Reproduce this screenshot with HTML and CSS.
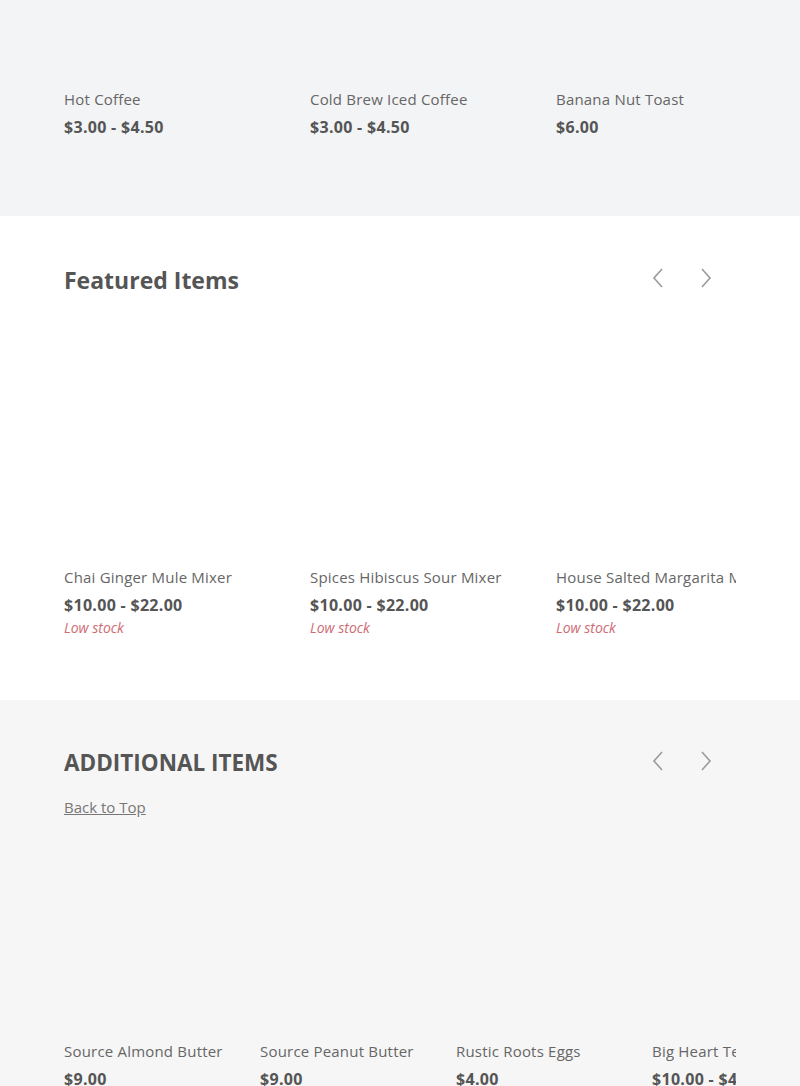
FILE: index.html
```html
<!DOCTYPE html>
<html lang="en">
<head>
  <meta charset="UTF-8">
  <title>Shop</title>
  <link rel="stylesheet" href="styles.css">
</head>
<body>

  <section class="strip strip-top">
    <div class="track">
      <div class="card wide">
        <div class="thumb thumb-cut"></div>
        <div class="name">Hot Coffee</div>
        <div class="price">$3.00 - $4.50</div>
      </div>
      <div class="card wide">
        <div class="thumb thumb-cut"></div>
        <div class="name">Cold Brew Iced Coffee</div>
        <div class="price">$3.00 - $4.50</div>
      </div>
      <div class="card wide">
        <div class="thumb thumb-cut"></div>
        <div class="name">Banana Nut Toast</div>
        <div class="price">$6.00</div>
      </div>
    </div>
  </section>

  <section class="strip strip-featured">
    <div class="strip-head">
      <h2 class="title">Featured Items</h2>
      <div class="arrows">
        <button class="arrow" aria-label="Previous">
          <svg width="12" height="20" viewBox="0 0 12 20"><polyline points="10,1 2,10 10,19" /></svg>
        </button>
        <button class="arrow" aria-label="Next">
          <svg width="12" height="20" viewBox="0 0 12 20"><polyline points="2,1 10,10 2,19" /></svg>
        </button>
      </div>
    </div>
    <div class="track track-featured">
      <div class="card wide">
        <div class="thumb"></div>
        <div class="name">Chai Ginger Mule Mixer</div>
        <div class="price">$10.00 - $22.00</div>
        <div class="stock">Low stock</div>
      </div>
      <div class="card wide">
        <div class="thumb"></div>
        <div class="name">Spices Hibiscus Sour Mixer</div>
        <div class="price">$10.00 - $22.00</div>
        <div class="stock">Low stock</div>
      </div>
      <div class="card wide">
        <div class="thumb"></div>
        <div class="name">House Salted Margarita Mixer</div>
        <div class="price">$10.00 - $22.00</div>
        <div class="stock">Low stock</div>
      </div>
    </div>
  </section>

  <section class="strip strip-additional">
    <div class="strip-head">
      <h2 class="title upper">Additional Items</h2>
      <div class="arrows">
        <button class="arrow" aria-label="Previous">
          <svg width="12" height="20" viewBox="0 0 12 20"><polyline points="10,1 2,10 10,19" /></svg>
        </button>
        <button class="arrow" aria-label="Next">
          <svg width="12" height="20" viewBox="0 0 12 20"><polyline points="2,1 10,10 2,19" /></svg>
        </button>
      </div>
    </div>
    <a class="back-top" href="#">Back to Top</a>
    <div class="track track-additional">
      <div class="card narrow">
        <div class="thumb"></div>
        <div class="name">Source Almond Butter</div>
        <div class="price">$9.00</div>
      </div>
      <div class="card narrow">
        <div class="thumb"></div>
        <div class="name">Source Peanut Butter</div>
        <div class="price">$9.00</div>
      </div>
      <div class="card narrow">
        <div class="thumb"></div>
        <div class="name">Rustic Roots Eggs</div>
        <div class="price">$4.00</div>
      </div>
      <div class="card narrow">
        <div class="thumb"></div>
        <div class="name">Big Heart Tea</div>
        <div class="price">$10.00 - $45.00</div>
      </div>
    </div>
  </section>

</body>
</html>
```

FILE: styles.css
```css
body {
  margin: 0;
  font-family: 'Open Sans', Lato, sans-serif;
  color: #666;
  background: #fff;
}

.strip {
  padding: 0 64px;
}

.strip-top {
  background-color: #f3f4f5;
  padding-bottom: 78px;
}

.strip-featured {
  background-color: #fff;
  padding-top: 48px;
  padding-bottom: 63px;
}

.strip-additional {
  background-color: #f6f6f6;
  padding-top: 47px;
  padding-bottom: 40px;
}

.strip-head {
  display: flex;
  justify-content: space-between;
  align-items: center;
}

.title {
  margin: 0;
  font-size: 23px;
  line-height: 32px;
  font-weight: bold;
  color: #555;
}

.title.upper {
  text-transform: uppercase;
  font-size: 22.5px;
}

.arrows {
  display: flex;
  gap: 16px;
  margin-right: 14px;
  margin-top: -4px;
}

.arrow {
  width: 32px;
  height: 32px;
  padding: 0;
  border: none;
  background: none;
  display: flex;
  align-items: center;
  justify-content: center;
  cursor: pointer;
}

.arrow polyline {
  fill: none;
  stroke: #9a9a9a;
  stroke-width: 1.6;
}

.back-top {
  display: block;
  width: max-content;
  margin-top: 17px;
  font-size: 15px;
  line-height: 22px;
  color: #777;
  text-decoration: underline;
}

/* carousel viewport, overflowing cards get clipped */
.track {
  display: flex;
  gap: 24px;
  overflow: hidden;
}

.track-featured {
  margin-top: 24px;
}

.track-additional {
  margin-top: 26px;
}

.card {
  flex: none;
}

.card.wide {
  width: 222px;
}

.card.narrow {
  width: 172px;
}

.thumb {
  aspect-ratio: 1 / 1;
  margin-bottom: 24px;
}

.thumb-cut {
  aspect-ratio: auto;
  height: 64px;
}

.name {
  font-size: 15px;
  line-height: 22px;
  letter-spacing: 0.2px;
  color: #666;
  white-space: nowrap;
}

.price {
  margin-top: 6px;
  font-size: 16px;
  line-height: 22px;
  font-weight: bold;
  letter-spacing: 0.3px;
  color: #555;
  white-space: nowrap;
}

.stock {
  margin-top: 3px;
  font-size: 14px;
  line-height: 18px;
  font-style: italic;
  color: #cf6b73;
}
```
